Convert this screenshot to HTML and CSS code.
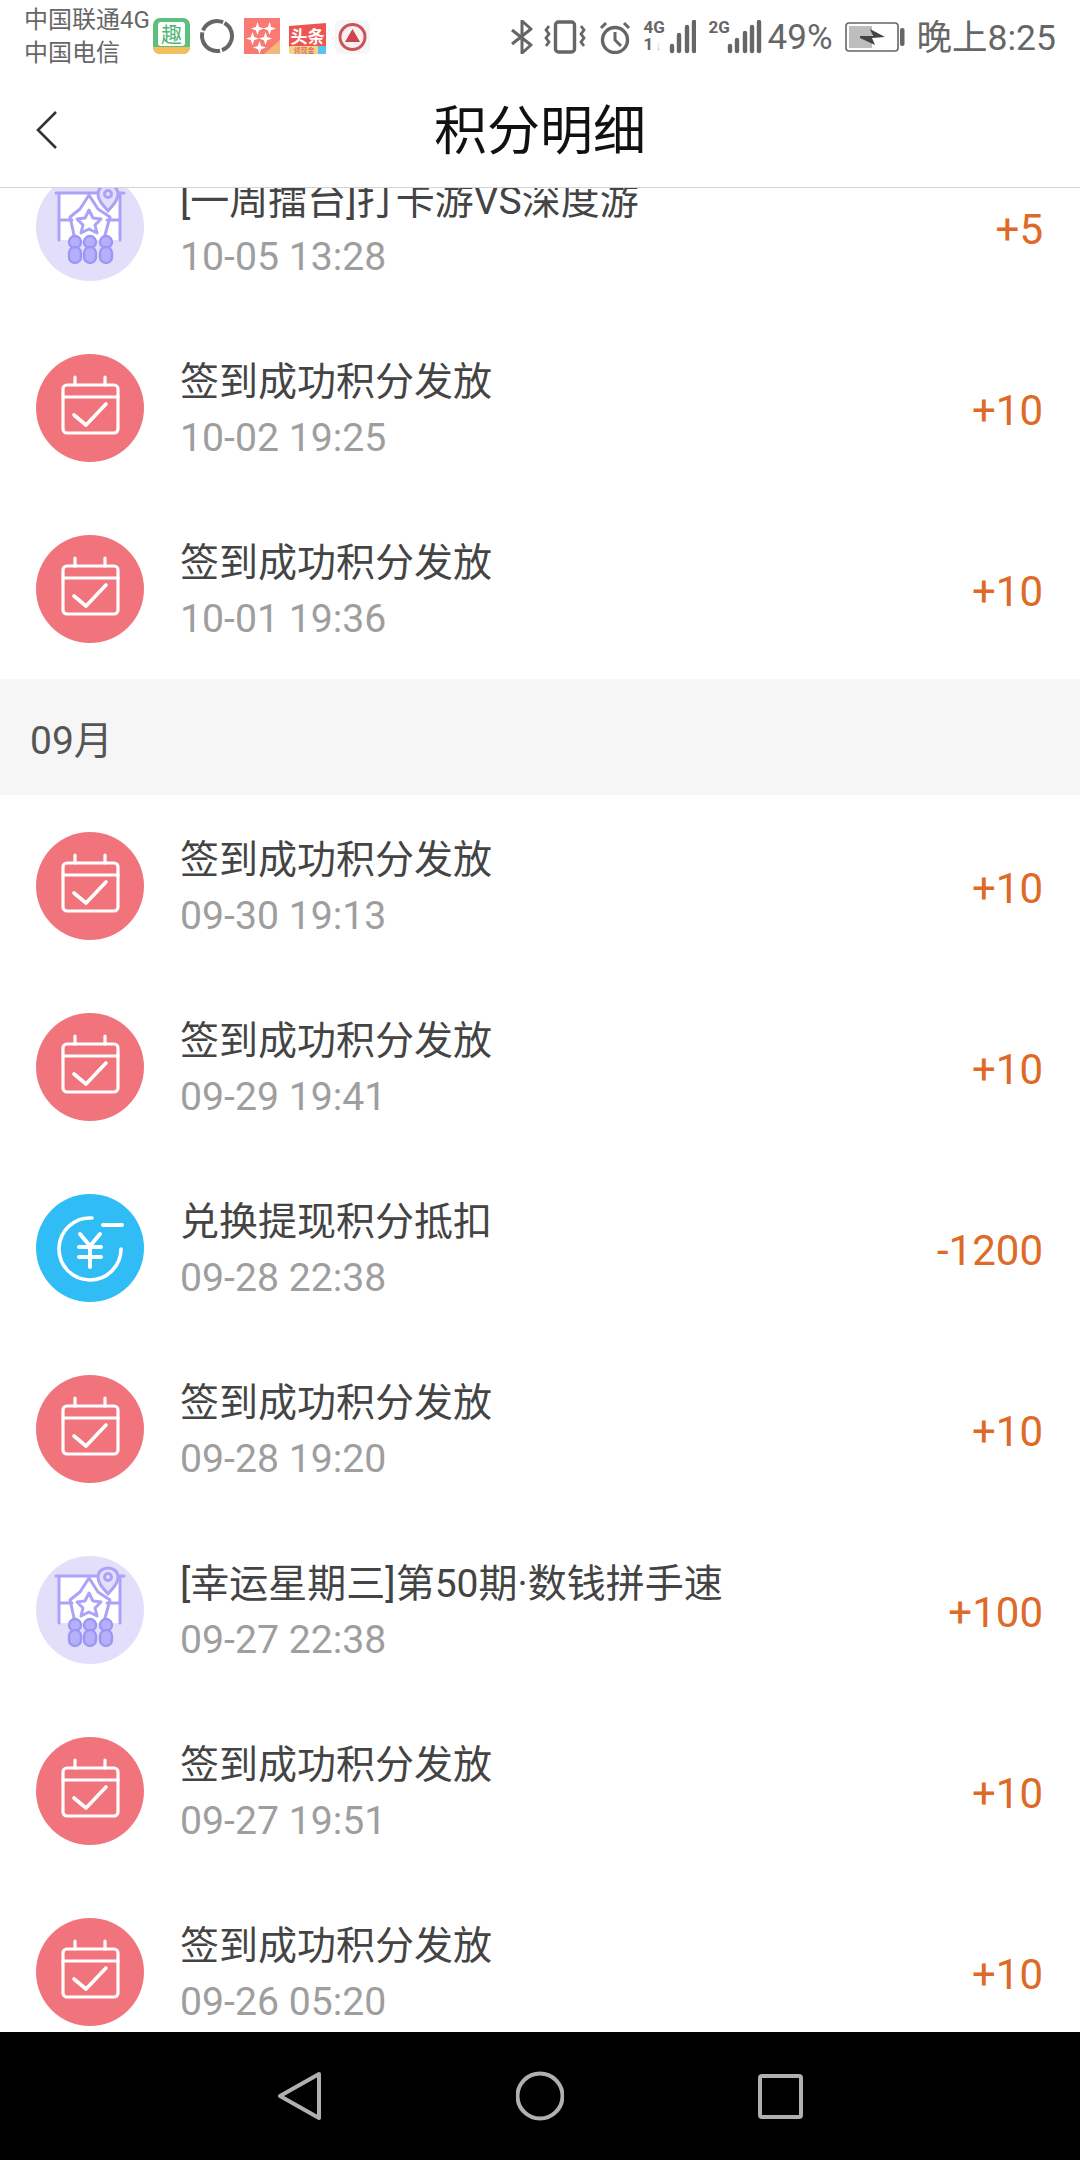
FILE: index.html
```html
<!DOCTYPE html>
<html lang="zh-CN">
<head>
    <meta charset="UTF-8">
    <title>积分明细</title>
    <meta name="viewport" content="width=device-width, initial-scale=1.0">
    <link rel="stylesheet" href="styles.css">
</head>
<body>
    <svg class="defs" width="0" height="0">
        <symbol id="ico-sign" viewBox="0 0 108 108">
            <circle cx="54" cy="54" r="54" fill="#f1747d"/>
            <g fill="none" stroke="#fff" stroke-width="3.2" stroke-linecap="round" stroke-linejoin="round">
                <rect x="27" y="31" width="55" height="48" rx="4"/>
                <path d="M27 43H82M39 23V31M69 23V31"/>
                <path d="M38 61L50 71L70 50" stroke-width="3.6"/>
            </g>
        </symbol>
        <symbol id="ico-game" viewBox="0 0 108 108">
            <circle cx="54" cy="54" r="54" fill="#e3dffb"/>
            <path d="M23 20H84V67H23Z" fill="#fff"/>
            <g fill="none" stroke="#a9a4f7" stroke-width="3" stroke-linejoin="round" stroke-linecap="round">
                <path d="M20 20H88M23 20V67M84 20V67M23 47H36M71 47H84"/>
                <path d="M53 22L44 36L34 44L38 62M53 22L62 36L74 44L69 62"/>
                <path d="M53 37L57 45L65 46L59 52L61 60L53 56L45 60L47 52L41 46L49 45Z"/>
                <path d="M72 38C66 31 62 27 62 21C62 15 67 12 72 12C77 12 82 15 82 21C82 27 78 31 72 38Z" fill="#e3dffb"/>
                <circle cx="72" cy="21" r="3.5"/>
            </g>
            <g fill="#b5b0f9" stroke="#9c96f4" stroke-width="2.4">
                <circle cx="39" cy="69" r="6"/>
                <circle cx="54" cy="69" r="6"/>
                <circle cx="70" cy="69" r="6"/>
                <rect x="33" y="74" width="12" height="16" rx="6"/>
                <rect x="48" y="74" width="12" height="16" rx="6"/>
                <rect x="64" y="74" width="12" height="16" rx="6"/>
            </g>
        </symbol>
        <symbol id="ico-cash" viewBox="0 0 108 108">
            <circle cx="54" cy="54" r="54" fill="#30bdf5"/>
            <g fill="none" stroke="#fff" stroke-width="3.6" stroke-linecap="round" stroke-linejoin="round">
                <path d="M56 24A31 31 0 1 0 85 55"/>
                <path d="M67 31H86" stroke-width="4"/>
                <path d="M44 40L54 52L64 40M43 53H65M43 63H65M54 52V73" stroke-width="4"/>
            </g>
        </symbol>
        <symbol id="sparkle" viewBox="-6 -6 12 12">
            <path d="M0 -6L1.500 -1.500L6 0L1.500 1.500L0 6L-1.500 1.500L-6 0L-1.500 -1.500Z" fill="#fff"/>
        </symbol>
    </svg>

    <div class="phone">
        <div class="statusbar">
            <div class="carrier">
                <div>中国联通4G</div>
                <div>中国电信</div>
            </div>
            <div class="apps">
                <svg width="37" height="36" viewBox="0 0 37 36">
                    <rect width="37" height="36" rx="7" fill="#5cbf7e"/>
                    <rect x="5" y="4" width="27" height="24" rx="3" fill="#fff"/>
                    <path d="M0 29H37V29C37 33 34 36 30 36H7C3 36 0 33 0 29Z" fill="#f3bf5a"/>
                    <text class="app-txt" x="18.5" y="24" font-size="21" text-anchor="middle" fill="#4fb573">趣</text>
                </svg>
                <svg width="36" height="36" viewBox="0 0 36 36">
                    <circle cx="18" cy="18" r="15" fill="none" stroke="#666" stroke-width="4" stroke-dasharray="34 2 30 2 24 2" transform="rotate(-60 18 18)"/>
                </svg>
                <svg width="36" height="36" viewBox="0 0 36 36">
                    <rect width="36" height="36" fill="#f87a72"/>
                    <path d="M36 22V36H20Z" fill="#f2b87a"/>
                    <use href="#sparkle" x="7" y="4" width="13" height="13"/>
                    <use href="#sparkle" x="19" y="4" width="13" height="13"/>
                    <use href="#sparkle" x="2" y="14" width="13" height="13"/>
                    <use href="#sparkle" x="15" y="14" width="13" height="13"/>
                    <use href="#sparkle" x="9" y="23" width="13" height="13"/>
                </svg>
                <svg width="37" height="31" viewBox="0 0 37 31">
                    <path d="M0 3L37 0V24H0Z" fill="#ee5552"/>
                    <rect y="23" width="37" height="8" rx="2" fill="#f7d28a"/>
                    <rect x="29" y="23" width="8" height="8" fill="#55c3ee"/>
                    <text class="app-txt" x="18.500" y="20" font-size="17" font-weight="700" text-anchor="middle" fill="#fff">头条</text>
                    <text class="app-txt" x="15" y="30" font-size="7" text-anchor="middle" fill="#c9544a">领现金</text>
                </svg>
                <svg width="35" height="34" viewBox="0 0 35 34">
                    <rect width="35" height="34" rx="6" fill="#f7f5f5"/>
                    <circle cx="17.500" cy="17" r="12.500" fill="#fbeeee" stroke="#c9555c" stroke-width="3"/>
                    <path d="M17.500 9L25 22H10Z" fill="#c9444c"/>
                </svg>
            </div>
            <div class="sys">
                <svg width="22" height="34" viewBox="0 0 22 34">
                    <path d="M1 10L20 25L11 33V1L20 9L1 24" fill="none" stroke="#666" stroke-width="3" stroke-linejoin="round"/>
                </svg>
                <svg class="s-vib" width="42" height="34" viewBox="0 0 42 34">
                    <rect x="11.500" y="2" width="19" height="30" rx="3" fill="none" stroke="#666" stroke-width="3.400"/>
                    <path d="M5 6L2 10L5 14L2 18L5 22L2 26M37 6L40 10L37 14L40 18L37 22L40 26" fill="none" stroke="#666" stroke-width="2.800"/>
                </svg>
                <svg class="s-alarm" width="32" height="33" viewBox="0 0 32 33">
                    <circle cx="16" cy="19" r="12.500" fill="none" stroke="#666" stroke-width="3.400"/>
                    <path d="M16 11V19L22 25M2 7L7 2M30 7L25 2" fill="none" stroke="#666" stroke-width="3"/>
                </svg>
                <div class="sig sig-4g">
                    <div class="sig-tag"><span>4G</span><span>1<i>↓</i></span></div>
                    <svg width="27" height="34" viewBox="0 0 27 34">
                        <path d="M3 26V31M10 15V31M18 7V31M25 2V31" stroke="#666" stroke-width="4.400" stroke-linecap="round"/>
                    </svg>
                </div>
                <div class="sig sig-2g">
                    <div class="sig-tag"><span>2G</span></div>
                    <svg width="35" height="34" viewBox="0 0 35 34">
                        <path d="M3 26V31M10 20V31M18 13V31M25 7V31M32 2V31" stroke="#666" stroke-width="4.400" stroke-linecap="round"/>
                    </svg>
                </div>
                <span class="batt-pct">49%</span>
                <svg class="s-batt" width="60" height="30" viewBox="0 0 60 30">
                    <rect x="1" y="1" width="52" height="28" rx="3" fill="none" stroke="#666" stroke-width="1.600"/>
                    <rect x="4" y="4" width="23" height="22" fill="#bdbdbd"/>
                    <path d="M15 14L28 14L25 7L40 15L27 16L30 23L15 16Z" fill="#444"/>
                    <rect x="55" y="6" width="4.500" height="18" rx="2" fill="#666"/>
                </svg>
                <span class="clock">晚上8:25</span>
            </div>
        </div>

        <div class="topbar">
            <div class="back">
                <svg width="21" height="38" viewBox="0 0 21 38">
                    <path d="M20 1L2 19L20 37" fill="none" stroke="#333" stroke-width="2.600"/>
                </svg>
            </div>
            <h1>积分明细</h1>
            <div></div>
        </div>

        <div class="list">
            <div class="list-inner">
                <div class="row">
                    <svg class="ico"><use href="#ico-game"/></svg>
                    <div class="info"><div class="name">[一周擂台]打卡游VS深度游</div><div class="date">10-05 13:28</div></div>
                    <div class="pts">+5</div>
                </div>
                <div class="row">
                    <svg class="ico"><use href="#ico-sign"/></svg>
                    <div class="info"><div class="name">签到成功积分发放</div><div class="date">10-02 19:25</div></div>
                    <div class="pts">+10</div>
                </div>
                <div class="row">
                    <svg class="ico"><use href="#ico-sign"/></svg>
                    <div class="info"><div class="name">签到成功积分发放</div><div class="date">10-01 19:36</div></div>
                    <div class="pts">+10</div>
                </div>
                <div class="month">09月</div>
                <div class="row">
                    <svg class="ico"><use href="#ico-sign"/></svg>
                    <div class="info"><div class="name">签到成功积分发放</div><div class="date">09-30 19:13</div></div>
                    <div class="pts">+10</div>
                </div>
                <div class="row">
                    <svg class="ico"><use href="#ico-sign"/></svg>
                    <div class="info"><div class="name">签到成功积分发放</div><div class="date">09-29 19:41</div></div>
                    <div class="pts">+10</div>
                </div>
                <div class="row">
                    <svg class="ico"><use href="#ico-cash"/></svg>
                    <div class="info"><div class="name">兑换提现积分抵扣</div><div class="date">09-28 22:38</div></div>
                    <div class="pts">-1200</div>
                </div>
                <div class="row">
                    <svg class="ico"><use href="#ico-sign"/></svg>
                    <div class="info"><div class="name">签到成功积分发放</div><div class="date">09-28 19:20</div></div>
                    <div class="pts">+10</div>
                </div>
                <div class="row">
                    <svg class="ico"><use href="#ico-game"/></svg>
                    <div class="info"><div class="name">[幸运星期三]第50期·数钱拼手速</div><div class="date">09-27 22:38</div></div>
                    <div class="pts">+100</div>
                </div>
                <div class="row">
                    <svg class="ico"><use href="#ico-sign"/></svg>
                    <div class="info"><div class="name">签到成功积分发放</div><div class="date">09-27 19:51</div></div>
                    <div class="pts">+10</div>
                </div>
                <div class="row">
                    <svg class="ico"><use href="#ico-sign"/></svg>
                    <div class="info"><div class="name">签到成功积分发放</div><div class="date">09-26 05:20</div></div>
                    <div class="pts">+10</div>
                </div>
            </div>
        </div>

        <div class="navbar">
            <svg width="48" height="50" viewBox="0 0 48 50">
                <path d="M44 3L5 25L44 47Z" transform="translate(-1 0)" fill="none" stroke="#b0b0b0" stroke-width="4" stroke-linejoin="round"/>
            </svg>
            <svg width="48" height="50" viewBox="0 0 48 50">
                <circle cx="24" cy="25" r="22.500" fill="none" stroke="#b0b0b0" stroke-width="4"/>
            </svg>
            <svg width="48" height="50" viewBox="0 0 48 50">
                <rect x="4" y="5" width="41" height="41" rx="2" fill="none" stroke="#b0b0b0" stroke-width="4"/>
            </svg>
        </div>
    </div>
</body>
</html>
```

FILE: styles.css
```css
* {
    box-sizing: border-box;
}

body {
    margin: 0;
    background: #fff;
    font-family: Roboto, "Noto Sans CJK SC", sans-serif;
}

.defs {
    display: block;
    height: 0;
}

.phone {
    width: 1080px;
    height: 2160px;
    display: flex;
    flex-direction: column;
    overflow: hidden;
}

/* status bar */
.statusbar {
    height: 72px;
    flex: none;
    display: flex;
    align-items: flex-start;
    padding-left: 24px;
    color: #666;
}

.carrier {
    width: 129px;
    padding-top: 4px;
    font-size: 24px;
    line-height: 33px;
    white-space: nowrap;
}

.apps {
    display: flex;
    align-items: flex-end;
    gap: 9px;
    height: 54px;
}

.apps svg {
    display: block;
}

.app-txt {
    font-family: "Noto Sans CJK SC", sans-serif;
}

.sys {
    margin-left: auto;
    display: flex;
    align-items: center;
    height: 74px;
    padding-right: 24px;
}

.sys > svg {
    display: block;
    flex: none;
}

.s-vib {
    margin-left: 11px;
}

.s-alarm {
    margin-left: 13px;
}

.sig {
    display: flex;
    align-items: flex-start;
    height: 34px;
    margin-left: 13px;
}

.sig-tag {
    display: flex;
    flex-direction: column;
    justify-content: space-between;
    height: 33px;
    font-family: "Liberation Sans Narrow", Roboto, sans-serif;
    font-size: 17px;
    line-height: 15px;
    font-weight: 700;
    color: #666;
}

.sig-4g .sig-tag {
    width: 25px;
}

.sig-2g .sig-tag {
    width: 18px;
}

.sig-tag i {
    font-style: normal;
    font-size: 13px;
    margin-left: 2px;
    color: #ccc;
}

.batt-pct {
    font-size: 35px;
    line-height: 40px;
    margin-left: 6px;
    margin-top: 1px;
}

.s-batt {
    margin-left: 12px;
}

.clock {
    font-size: 35.500px;
    line-height: 40px;
    margin-left: 12px;
    margin-top: 1px;
    white-space: nowrap;
}

/* title bar */
.topbar {
    height: 116px;
    flex: none;
    display: grid;
    grid-template-columns: 1fr auto 1fr;
    align-items: center;
    padding: 4px 36px 0;
    border-bottom: 1px solid #d4d4d4;
}

.back {
    margin-top: -4px;
}

.back svg {
    display: block;
}

.topbar h1 {
    margin: 0;
    font-size: 53px;
    line-height: 72px;
    font-weight: 400;
    color: #111;
}

/* list */
.list {
    flex: 1;
    overflow: hidden;
}

.list-inner {
    margin-top: -52px;
}

.row {
    height: 181px;
    display: flex;
    align-items: center;
    padding: 0 37px 0 36px;
}

.ico {
    width: 108px;
    height: 108px;
    flex: none;
    margin-right: 36px;
}

.info {
    flex: 1;
    min-width: 0;
    padding-top: 5px;
}

.name {
    font-size: 39px;
    line-height: 56px;
    color: #444;
}

.date {
    font-size: 39.200px;
    line-height: 56px;
    color: #9e9e9e;
}

.pts {
    padding-top: 5px;
    font-size: 42px;
    color: #dd6a26;
}

.month {
    height: 116px;
    padding-left: 30px;
    display: flex;
    align-items: center;
    background: #f6f6f6;
    font-size: 39px;
    color: #555;
}

/* android nav */
.navbar {
    height: 128px;
    flex: none;
    display: flex;
    align-items: center;
    justify-content: center;
    gap: 192px;
    background: #000;
}
```
